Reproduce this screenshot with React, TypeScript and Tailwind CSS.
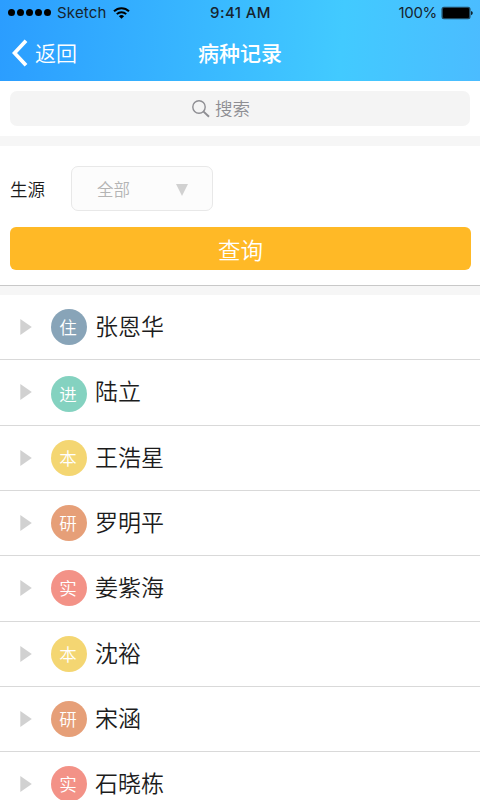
import clsx from "clsx";

interface RecordItem {
  tag: string;
  name: string;
  color: string;
  shifted?: boolean;
}

const records: RecordItem[] = [
  { tag: "住", name: "张恩华", color: "bg-[#88a4b8]" },
  { tag: "进", name: "陆立", color: "bg-[#84d2c0]", shifted: true },
  { tag: "本", name: "王浩星", color: "bg-[#f4d672]" },
  { tag: "研", name: "罗明平", color: "bg-[#e69f78]" },
  { tag: "实", name: "姜紫海", color: "bg-[#f39287]" },
  { tag: "本", name: "沈裕", color: "bg-[#f4d672]" },
  { tag: "研", name: "宋涵", color: "bg-[#e69f78]" },
  { tag: "实", name: "石晓栋", color: "bg-[#f39287]" },
];

function StatusBar() {
  return (
    <div className="grid h-[25px] grid-cols-3 items-center pl-2 pr-[7px] font-['Inter',sans-serif] text-[15px] leading-none font-normal text-[#16242e]">
      <div className="flex items-center">
        <div className="flex gap-[2px]">
          {[0, 1, 2, 3, 4].map((i) => (
            <span key={i} className="size-[7px] rounded-full bg-black" />
          ))}
        </div>
        <span className="ml-[6px] tracking-[0.2px]">Sketch</span>
        <svg className="ml-[6px] h-3 w-[17px]" viewBox="0 0 17 12" fill="none" stroke="#000" strokeWidth="2">
          <path d="M1 4.2a10.7 10.7 0 0 1 15 0" />
          <path d="M3.8 7.1a6.7 6.7 0 0 1 9.4 0" />
          <path d="M8.5 11.8 5.9 9.2a3.7 3.7 0 0 1 5.2 0Z" fill="#000" stroke="none" />
        </svg>
      </div>
      <div className="text-center font-medium tracking-[0.4px]">9:41 AM</div>
      <div className="flex items-center justify-end">
        <span className="tracking-[-0.3px]">100%</span>
        <svg className="ml-1 h-[14px] w-8" viewBox="0 0 32 14">
          <rect x="0.5" y="0.7" width="29" height="12.6" rx="2.5" fill="#20485f" />
          <rect x="2" y="2" width="26" height="10" rx="1" fill="#000" />
          <path d="M30.2 5v4.2q1.5-.5 1.5-2.1t-1.5-2.1Z" fill="#000" />
        </svg>
      </div>
    </div>
  );
}

function Header() {
  return (
    <header className="h-[81px] bg-[linear-gradient(94deg,#2b9dff_0%,#42caff_71%,#4bbcff_100%)]">
      <StatusBar />
      <div className="grid h-14 grid-cols-3 items-center text-[21px] leading-none text-white">
        <button className="flex items-center pl-3">
          <svg className="h-[28px] w-4" viewBox="0 0 16 28" fill="none" stroke="#fff" strokeWidth="3.8">
            <path d="M14 1.7 2.5 14 14 26.3" />
          </svg>
          <span className="-mt-[2px] ml-[7px] font-[350]">返回</span>
        </button>
        <h1 className="-mt-[2px] text-center font-medium">病种记录</h1>
      </div>
    </header>
  );
}

export default function App() {
  return (
    <div className="h-[800px] w-[480px] overflow-hidden bg-white font-['Noto_Sans_CJK_SC',sans-serif] font-[350] text-[#1c1c1c]">
      <Header />

      <div className="h-[55px] px-[10px] pt-[10px]">
        <div className="flex h-[35px] items-center justify-center rounded-[7px] bg-[#f4f4f4] pr-[40px] text-[17.5px] leading-none text-[#8e8e93]">
          <svg className="ml-[2px] mr-[5px] size-[18px]" viewBox="0 0 18 18" fill="none" stroke="#8e8e93">
            <circle cx="7" cy="7" r="6.2" strokeWidth="1.4" />
            <path d="m11.6 11.6 5.4 5.2" strokeWidth="2" />
          </svg>
          <span className="-mt-px">搜索</span>
        </div>
      </div>
      <div className="h-[10px] bg-[#f6f6f6]" />

      <section className="h-[139px] px-[10px] pt-[20px]">
        <div className="flex items-center text-[17.5px] leading-none">
          <label className="pt-px">生源</label>
          <div className="ml-[26px] flex h-[45px] w-[142px] items-center justify-between rounded-[7px] border-[1.5px] border-[#e8e8e8] bg-[#fcfcfc] pl-[25px] pr-[24px] text-[16.5px] text-[#b4b4b4]">
            <span className="pt-px">全部</span>
            <svg className="mt-[2px] h-3 w-3" viewBox="0 0 12 12">
              <path d="M0 0h12L6 12Z" fill="#d1d1d1" />
            </svg>
          </div>
        </div>
        <button className="mt-4 h-[43px] w-[461px] rounded-[6px] bg-[#ffb926] pt-[2px] text-[22.5px] leading-none text-white">
          查询
        </button>
      </section>
      <div className="h-[10px] border-t border-[#c8c8c8] bg-[#f6f6f6]" />

      <ul>
        {records.map((item, i) => (
          <li key={i} className="flex h-[65.33px] items-center border-b-[1.5px] border-[#d9d9d9] pl-5">
            <svg className="h-4 w-3" viewBox="0 0 12 16">
              <path d="M.3 0v16L11.8 8Z" fill="#d1d1d1" />
            </svg>
            <span
              className={clsx(
                "ml-[19px] flex size-9 items-center justify-center rounded-full pb-px pr-[2px] text-[17.5px] leading-none text-white",
                item.color,
                item.shifted && "translate-y-[2px]"
              )}
            >
              {item.tag}
            </span>
            <span className="-mt-[3px] ml-2 text-[23px] leading-none">{item.name}</span>
          </li>
        ))}
      </ul>
    </div>
  );
}
